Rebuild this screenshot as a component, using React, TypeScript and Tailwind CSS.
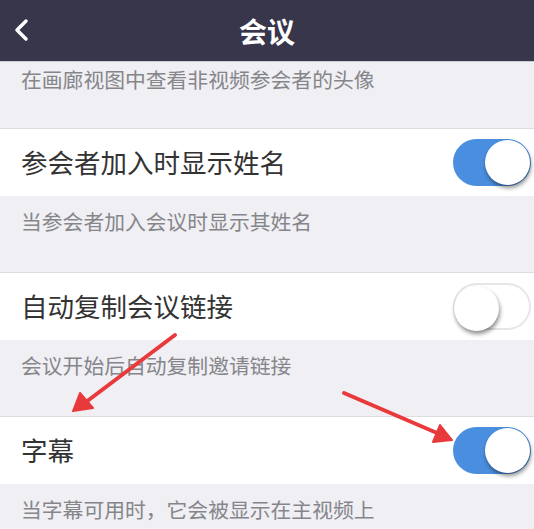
import React from 'react';

const FONT = '"Noto Sans CJK SC", "Noto Sans", sans-serif';

function Toggle({ on }: { on: boolean }) {
  return (
    <div
      className={`relative h-[47px] w-[78px] rounded-full ${
        on ? 'bg-[#4a8ee0]' : 'border-2 border-[#e6e6ea] bg-white'
      }`}
    >
      <div
        className={`absolute top-[1px] h-[45px] w-[45px] rounded-full bg-white shadow-[1px_3px_4px_rgba(0,0,0,0.45)] ${
          on ? 'right-[1px]' : 'left-[-1px] top-[-1px]'
        }`}
      />
    </div>
  );
}

function Row({ label, on }: { label: string; on: boolean }) {
  return (
    <div className="flex h-[68px] items-center justify-between border-t border-[#dcdce1] bg-white pl-[21px] pr-[3px]">
      <span className="text-[26.5px] leading-none text-[#333]">{label}</span>
      <Toggle on={on} />
    </div>
  );
}

function Note({ text, first }: { text: string; first?: boolean }) {
  return (
    <div
      className={`bg-[#efeff4] pl-[21px] text-[20.8px] leading-[28px] text-[#86868a] ${
        first ? 'h-[66px] pt-[3px]' : 'h-[76px] pt-[11px]'
      }`}
    >
      {text}
    </div>
  );
}

export default function App() {
  return (
    <div className="relative h-[529px] w-[534px] overflow-hidden bg-[#efeff4]" style={{ fontFamily: FONT }}>
      {/* 顶部导航栏 */}
      <div className="relative flex h-[62px] items-center justify-center border-b border-[#c9c9ce] bg-[#37364b]">
        <svg className="absolute left-[12px] top-[18px]" width="18" height="24" viewBox="0 0 18 24">
          <path d="M14 3 L5 12 L14 21" fill="none" stroke="white" strokeWidth="3.5" strokeLinecap="round" strokeLinejoin="round" />
        </svg>
        <span className="text-[28px] font-bold text-white">会议</span>
      </div>

      <Note first text="在画廊视图中查看非视频参会者的头像" />
      <Row label="参会者加入时显示姓名" on />
      <Note text="当参会者加入会议时显示其姓名" />
      <Row label="自动复制会议链接" on={false} />
      <Note text="会议开始后自动复制邀请链接" />
      <Row label="字幕" on />
      <Note text="当字幕可用时，它会被显示在主视频上" />

      {/* 标注箭头 */}
      <svg className="pointer-events-none absolute inset-0" width="534" height="529" viewBox="0 0 534 529">
        <g stroke="#e8393b" strokeWidth="4" strokeLinecap="round" fill="#e8393b">
          <line x1="175" y1="335" x2="86" y2="402" />
          <polygon points="73,411 80,393 93,408" strokeWidth="2" strokeLinejoin="round" />
          <line x1="344" y1="393" x2="437" y2="433" />
          <polygon points="452,440 433,442 440,425" strokeWidth="2" strokeLinejoin="round" />
        </g>
      </svg>
    </div>
  );
}
